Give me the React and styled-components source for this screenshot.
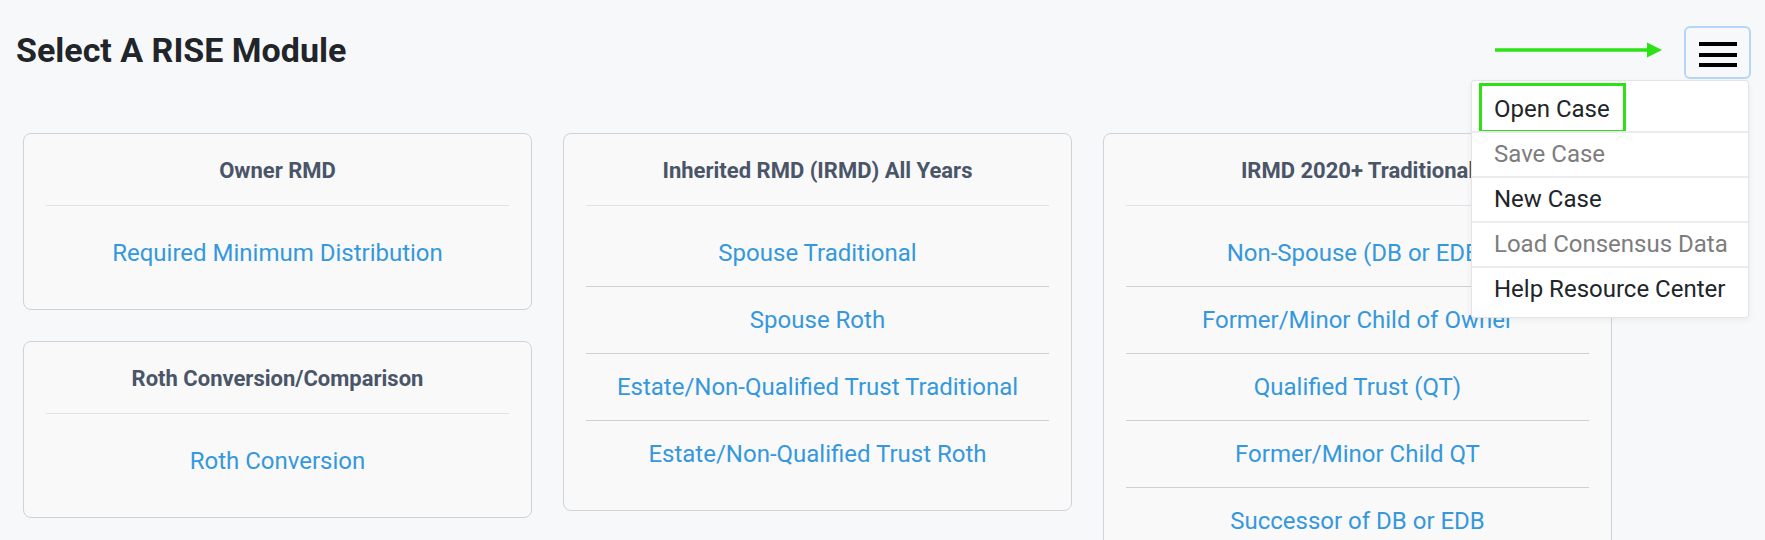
import React from 'react';
import styled, { createGlobalStyle, css } from 'styled-components';

const GlobalStyle = createGlobalStyle`
  body {
    margin: 0;
    background: #f7f8fa;
    font-family: Roboto, "Liberation Sans", Arial, sans-serif;
  }
`

const columns = [
  [
    { title: 'Owner RMD', links: ['Required Minimum Distribution'] },
    { title: 'Roth Conversion/Comparison', links: ['Roth Conversion'] },
  ],
  [
    {
      title: 'Inherited RMD (IRMD) All Years',
      links: [
        'Spouse Traditional',
        'Spouse Roth',
        'Estate/Non-Qualified Trust Traditional',
        'Estate/Non-Qualified Trust Roth',
      ],
    },
  ],
  [
    {
      title: 'IRMD 2020+ Traditional',
      links: [
        'Non-Spouse (DB or EDB)',
        'Former/Minor Child of Owner',
        'Qualified Trust (QT)',
        'Former/Minor Child QT',
        'Successor of DB or EDB',
      ],
    },
  ],
]

const menuItems = [
  { label: 'Open Case', marked: true },
  { label: 'Save Case', disabled: true },
  { label: 'New Case' },
  { label: 'Load Consensus Data', disabled: true },
  { label: 'Help Resource Center' },
]

const App = () => {
  return (
    <>
      <GlobalStyle />
      <Page>
        <TopBar>
          <Title>Select A RISE Module</Title>
          <Actions>
            <Arrow viewBox="0 0 168 16">
              <line x1="0" y1="8" x2="153" y2="8" stroke="#2be214" strokeWidth="3.5" />
              <polygon points="152,0.5 167,8 152,15.5" fill="#2be214" />
            </Arrow>
            <MenuButton aria-label="menu">
              <span />
              <span />
              <span />
            </MenuButton>
            <Dropdown>
              {menuItems.map((item) => (
                <MenuItem key={item.label} disabled={item.disabled} marked={item.marked}>
                  {item.label}
                </MenuItem>
              ))}
            </Dropdown>
          </Actions>
        </TopBar>

        <Grid>
          {columns.map((cards, i) => (
            <Column key={i}>
              {cards.map((card) => (
                <Card key={card.title}>
                  <CardTitle>{card.title}</CardTitle>
                  <LinkList>
                    {card.links.map((link) => (
                      <LinkItem key={link}>{link}</LinkItem>
                    ))}
                  </LinkList>
                </Card>
              ))}
            </Column>
          ))}
        </Grid>
      </Page>
    </>
  )
}

const Page = styled.div`
  padding: 26px 14px 40px 16px;
`

const TopBar = styled.header`
  display: flex;
  justify-content: space-between;
  align-items: flex-start;
`

const Title = styled.h1`
  margin: 3px 0 0;
  font-size: 34px;
  line-height: 42px;
  font-weight: 700;
  color: #212529;
`

const Actions = styled.div`
  position: relative;
  display: flex;
  align-items: flex-start;
  gap: 21px;
`

const Arrow = styled.svg`
  width: 168px;
  height: 16px;
  margin-top: 16px;
`

const MenuButton = styled.button`
  box-sizing: border-box;
  width: 67px;
  height: 53px;
  padding: 4px 0 0;
  border: 2px solid #b6d6f8;
  border-radius: 6px;
  background: transparent;
  display: flex;
  flex-direction: column;
  align-items: center;
  justify-content: center;
  gap: 6.5px;
  cursor: pointer;
  span {
    display: block;
    width: 38px;
    height: 4px;
    background: #000;
  }
`

const Dropdown = styled.div`
  position: absolute;
  top: 54px;
  right: 2px;
  width: 278px;
  box-sizing: border-box;
  padding: 7px 0 6px;
  background: #fff;
  border: 1px solid #e3e4e6;
  border-radius: 3px;
  box-shadow: 0 2px 6px rgba(0, 0, 0, 0.06);
  z-index: 10;
`

const MenuItem = styled.div`
  position: relative;
  padding: 7px 20px 7px 22px;
  font-size: 24px;
  line-height: 29px;
  color: ${(props) => (props.disabled ? '#7d7d7d' : '#212529')};
  cursor: pointer;
  & + & {
    border-top: 2px solid #ececee;
  }
  ${(props) =>
    props.marked &&
    css`
      &::after {
        content: '';
        position: absolute;
        left: 7px;
        top: -5px;
        width: 147px;
        height: 50px;
        box-sizing: border-box;
        border: 3px solid #2be214;
      }
    `}
`

const Grid = styled.main`
  display: grid;
  grid-template-columns: repeat(3, 509px);
  column-gap: 31px;
  align-items: start;
  margin-top: 54px;
  padding: 0 7px;
`

const Column = styled.div`
  display: flex;
  flex-direction: column;
  gap: 31px;
`

const Card = styled.section`
  background: #f9f9fa;
  border: 1px solid #cfd2d6;
  border-radius: 8px;
  padding: 24px 22px 23px;
`

const CardTitle = styled.h2`
  margin: 0;
  padding-bottom: 21px;
  border-bottom: 1px solid #dde3ea;
  font-size: 22px;
  line-height: 26px;
  font-weight: 700;
  text-align: center;
  color: #4a5568;
`

const LinkList = styled.div`
  padding-top: 14px;
`

const LinkItem = styled.div`
  padding: 19px 0 18px;
  font-size: 24px;
  line-height: 29px;
  text-align: center;
  color: #3598dc;
  cursor: pointer;
  & + & {
    border-top: 1px solid #cdd1d5;
  }
`

export default App;
